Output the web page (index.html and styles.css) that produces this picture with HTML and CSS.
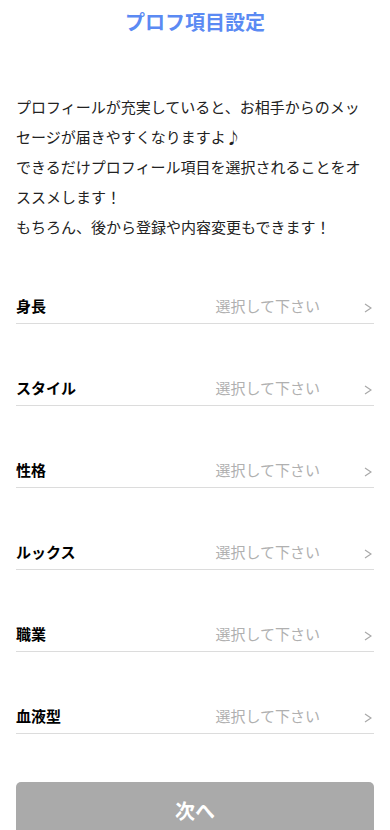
FILE: index.html
```html
<!DOCTYPE html>
<html lang="ja">
<head>
<meta charset="utf-8">
<meta name="viewport" content="width=device-width, initial-scale=1">
<link rel="stylesheet" href="styles.css">
<title>プロフ項目設定</title>
</head>
<body>
<header class="header"><h1 class="title">プロフ項目設定</h1></header>
<main class="content">
  <p class="intro">プロフィールが充実していると、お相手からのメッセージが届きやすくなりますよ♪<br>できるだけプロフィール項目を選択されることをオススメします！<br>もちろん、後から登録や内容変更もできます！</p>
  <ul class="fields">
    <li class="field"><span class="label">身長</span><span class="value">選択して下さい</span><svg class="chev" width="8" height="10" viewBox="0 0 8 10"><polyline points="1,1 7,5 1,9" fill="none" stroke="#a8a8a8" stroke-width="1.2"/></svg></li>
    <li class="field"><span class="label">スタイル</span><span class="value">選択して下さい</span><svg class="chev" width="8" height="10" viewBox="0 0 8 10"><polyline points="1,1 7,5 1,9" fill="none" stroke="#a8a8a8" stroke-width="1.2"/></svg></li>
    <li class="field"><span class="label">性格</span><span class="value">選択して下さい</span><svg class="chev" width="8" height="10" viewBox="0 0 8 10"><polyline points="1,1 7,5 1,9" fill="none" stroke="#a8a8a8" stroke-width="1.2"/></svg></li>
    <li class="field"><span class="label">ルックス</span><span class="value">選択して下さい</span><svg class="chev" width="8" height="10" viewBox="0 0 8 10"><polyline points="1,1 7,5 1,9" fill="none" stroke="#a8a8a8" stroke-width="1.2"/></svg></li>
    <li class="field"><span class="label">職業</span><span class="value">選択して下さい</span><svg class="chev" width="8" height="10" viewBox="0 0 8 10"><polyline points="1,1 7,5 1,9" fill="none" stroke="#a8a8a8" stroke-width="1.2"/></svg></li>
    <li class="field"><span class="label">血液型</span><span class="value">選択して下さい</span><svg class="chev" width="8" height="10" viewBox="0 0 8 10"><polyline points="1,1 7,5 1,9" fill="none" stroke="#a8a8a8" stroke-width="1.2"/></svg></li>
  </ul>
  <button class="next" type="button">次へ</button>
</main>
</body>
</html>
```
FILE: styles.css
```css
* { box-sizing: border-box; }
html, body { margin: 0; padding: 0; background: #fff; }
body {
  font-family: "Noto Sans CJK JP", "Noto Sans", sans-serif;
  color: #222;
}
.header {
  height: 44px;
  display: flex;
  align-items: center;
  justify-content: center;
}
.title {
  margin: 0;
  font-size: 20px;
  font-weight: 700;
  color: #5b8af3;
  line-height: 1;
}
.content {
  padding: 48px 16px 0;
}
.intro {
  margin: 0;
  font-size: 15px;
  line-height: 30px;
  color: #222;
}
.fields {
  list-style: none;
  margin: 0;
  padding: 0;
}
.field {
  display: flex;
  align-items: center;
  padding-top: 49px;
  padding-bottom: 2px;
  height: 82px;
  line-height: 30px;
  border-bottom: 1px solid #dcdcdc;
}
.label {
  flex: 1;
  font-size: 15px;
  font-weight: 700;
  color: #000;
}
.value {
  font-size: 15px;
  color: #b0b0b0;
  margin-right: 44px;
}
.chev {
  display: block;
  margin-top: 4px;
  margin-right: 2px;
}
.next {
  display: block;
  width: 100%;
  height: 56px;
  margin-top: 48px;
  border: 0;
  border-radius: 5px;
  background: #aaaaaa;
  color: #fff;
  font-family: inherit;
  font-size: 20px;
  font-weight: 700;
}
```
